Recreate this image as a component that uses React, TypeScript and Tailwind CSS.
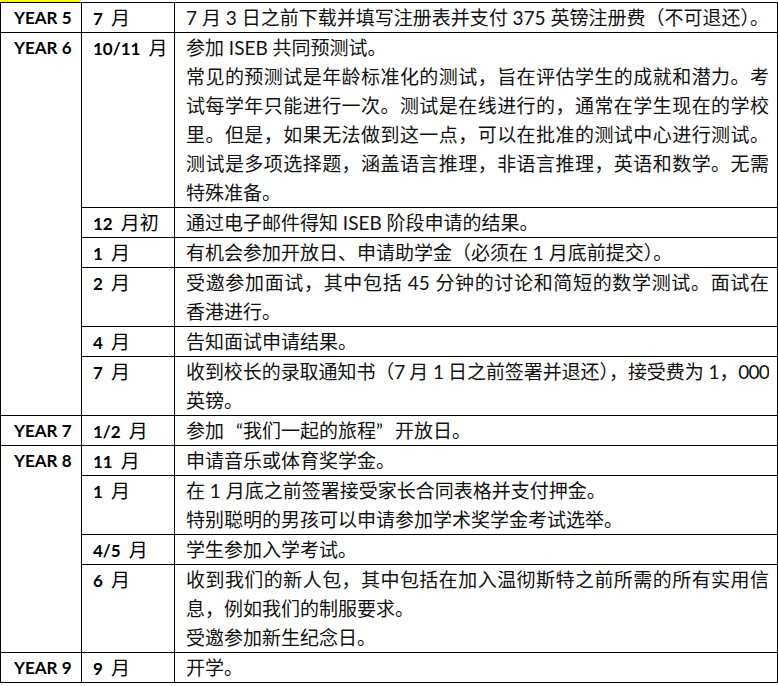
import React from 'react';

type Line = { t: React.ReactNode; j?: boolean; tight?: boolean };
type Item = { when: string; lines: Line[] };
type Group = { year: string; items: Item[] };

const full = (t: React.ReactNode, tight?: boolean): Line => ({ t, j: true, tight });
const last = (t: React.ReactNode): Line => ({ t });

// full-width quote marks, like the CJK font in the source document
const Q = ({ c, right }: { c: string; right?: boolean }) => (
  <span className={`inline-block w-[19px] ${right ? 'text-right' : 'text-left'}`}>{c}</span>
);

const groups: Group[] = [
  {
    year: 'YEAR 5',
    items: [{ when: '7 月', lines: [last('7 月 3 日之前下载并填写注册表并支付 375 英镑注册费（不可退还）。')] }],
  },
  {
    year: 'YEAR 6',
    items: [
      {
        when: '10/11 月',
        lines: [
          last('参加 ISEB 共同预测试。'),
          full('常见的预测试是年龄标准化的测试，旨在评估学生的成就和潜力。考'),
          full('试每学年只能进行一次。测试是在线进行的，通常在学生现在的学校'),
          full('里。但是，如果无法做到这一点，可以在批准的测试中心进行测试。'),
          full('测试是多项选择题，涵盖语言推理，非语言推理，英语和数学。无需'),
          last('特殊准备。'),
        ],
      },
      { when: '12 月初', lines: [last('通过电子邮件得知 ISEB 阶段申请的结果。')] },
      { when: '1 月', lines: [last('有机会参加开放日、申请助学金（必须在 1 月底前提交）。')] },
      {
        when: '2 月',
        lines: [full('受邀参加面试，其中包括 45 分钟的讨论和简短的数学测试。面试在'), last('香港进行。')],
      },
      { when: '4 月', lines: [last('告知面试申请结果。')] },
      {
        when: '7 月',
        lines: [full('收到校长的录取通知书（7 月 1 日之前签署并退还），接受费为 1，000', true), last('英镑。')],
      },
    ],
  },
  {
    year: 'YEAR 7',
    items: [
      {
        when: '1/2 月',
        lines: [
          last(
            <>
              参加<Q c="“" right />我们一起的旅程<Q c="”" />开放日。
            </>
          ),
        ],
      },
    ],
  },
  {
    year: 'YEAR 8',
    items: [
      { when: '11 月', lines: [last('申请音乐或体育奖学金。')] },
      {
        when: '1 月',
        lines: [last('在 1 月底之前签署接受家长合同表格并支付押金。'), last('特别聪明的男孩可以申请参加学术奖学金考试选举。')],
      },
      { when: '4/5 月', lines: [last('学生参加入学考试。')] },
      {
        when: '6 月',
        lines: [
          full('收到我们的新人包，其中包括在加入温彻斯特之前所需的所有实用信'),
          last('息，例如我们的制服要求。'),
          last('受邀参加新生纪念日。'),
        ],
      },
    ],
  },
  {
    year: 'YEAR 9',
    items: [{ when: '9 月', lines: [last('开学。')] }],
  },
];

// digits bold, chinese part regular
const When = ({ text }: { text: string }) => {
  const i = text.search(/[\u4e00-\u9fff]/);
  const head = (i < 0 ? text : text.slice(0, i)).trim();
  const tail = i < 0 ? '' : text.slice(i);
  return (
    <div className="h-[29px] whitespace-nowrap">
      <span className="font-bold text-[17px]">{head}</span>
      {tail && <span className="ml-[8px] text-[19px]">{tail}</span>}
    </div>
  );
};

const App = () => {
  const font = "font-['Lato','Noto_Sans_CJK_SC',sans-serif]";
  return (
    <div className={`bg-white w-[778px] h-[686px] text-black overflow-hidden ${font}`}>
      <div className="h-[2px] w-[80px] bg-[#ffff00]" />
      <table className="w-[777px] table-fixed border-collapse leading-[29px]">
        <colgroup>
          <col className="w-[81px]" />
          <col className="w-[93px]" />
          <col className="w-[603px]" />
        </colgroup>
        <tbody>
          {groups.map((g) =>
            g.items.map((it, k) => (
              <tr key={g.year + k}>
                {k === 0 && (
                  <td
                    rowSpan={g.items.length}
                    className="border border-black align-top p-0 pl-[13px] text-[17px] font-bold"
                  >
                    <div className="h-[29px] whitespace-nowrap">{g.year}</div>
                  </td>
                )}
                <td className="border border-black align-top p-0 pl-[11px]">
                  <When text={it.when} />
                </td>
                <td className="border border-black align-top p-0 pl-[11px] pr-[8px] text-[19px] text-[#111]">
                  {it.lines.map((l, n) => (
                    <div
                      key={n}
                      className={
                        l.tight
                          ? 'h-[29px] overflow-hidden whitespace-nowrap text-justify [text-align-last:justify] tracking-[-0.8px]'
                          : l.j
                          ? 'h-[29px] overflow-hidden whitespace-nowrap text-justify [text-align-last:justify]'
                          : 'h-[29px] overflow-hidden whitespace-nowrap'
                      }
                    >
                      {l.t}
                    </div>
                  ))}
                </td>
              </tr>
            ))
          )}
        </tbody>
      </table>
    </div>
  );
};

export default App;
